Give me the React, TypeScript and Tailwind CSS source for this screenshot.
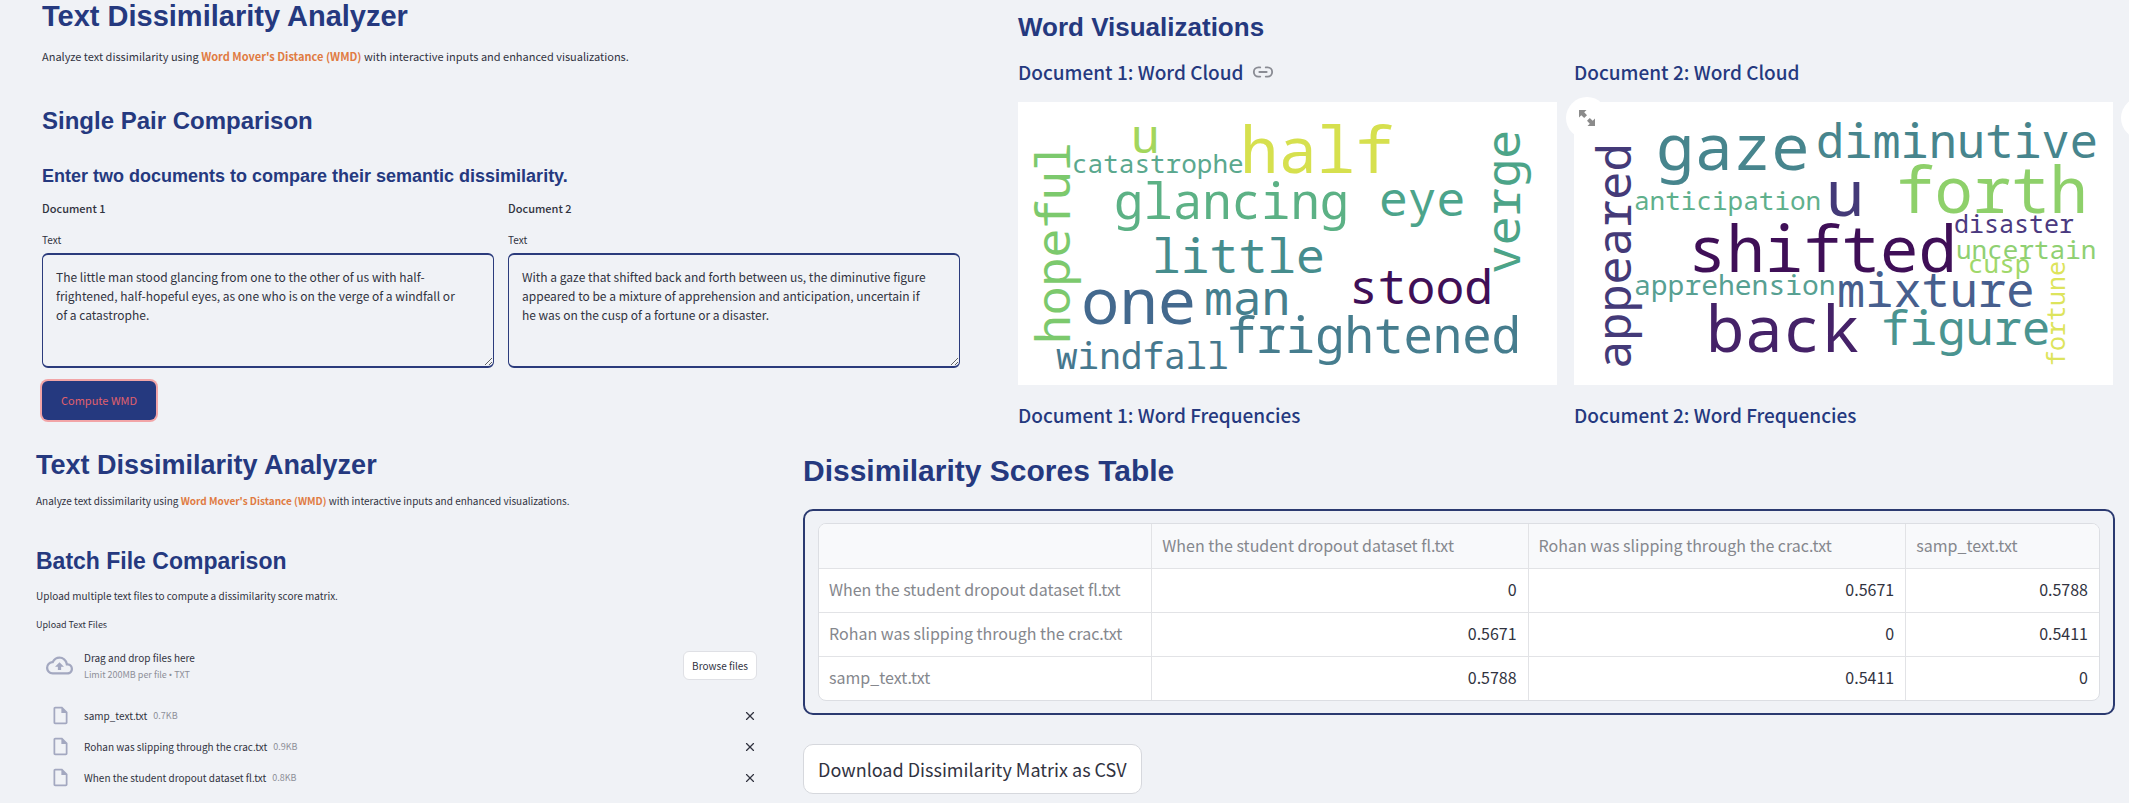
import React from "react";
import { Link2, X } from "lucide-react";
import { MdOutlineCloudUpload, MdOutlineInsertDriveFile } from "react-icons/md";

type Word = { text: string; x: number; y: number; size: number; color: string; up?: boolean };

const cloudOne: Word[] = [
  { text: "hopeful", x: 52, y: 242, size: 48, color: "#7cc96d", up: true },
  { text: "verge", x: 502, y: 172, size: 48, color: "#4ca488", up: true },
  { text: "u", x: 113, y: 51, size: 48, color: "#a3d65c" },
  { text: "half", x: 222, y: 71, size: 64, color: "#d6e04e" },
  { text: "catastrophe", x: 54, y: 71, size: 26, color: "#5aa88e" },
  { text: "glancing", x: 96, y: 117, size: 49, color: "#5cb185" },
  { text: "eye", x: 361, y: 114, size: 48, color: "#4ca48b" },
  { text: "little", x: 134, y: 171, size: 48, color: "#468d8d" },
  { text: "stood", x: 331, y: 202, size: 48, color: "#3f0f57" },
  { text: "one", x: 63, y: 222, size: 64, color: "#43698e" },
  { text: "man", x: 186, y: 213, size: 48, color: "#467f8e" },
  { text: "frightened", x: 209, y: 251, size: 49, color: "#467d8e" },
  { text: "windfall", x: 38, y: 267, size: 36, color: "#46788e" },
];

const cloudTwo: Word[] = [
  { text: "appeared", x: 57, y: 267, size: 47, color: "#443a78", up: true },
  { text: "fortune", x: 491, y: 264, size: 25, color: "#dde45c", up: true },
  { text: "gaze", x: 82, y: 68, size: 64, color: "#47858d" },
  { text: "diminutive", x: 242, y: 56, size: 47, color: "#47858d" },
  { text: "anticipation", x: 60, y: 108, size: 26, color: "#5fb08c" },
  { text: "u", x: 252, y: 114, size: 64, color: "#443a78" },
  { text: "forth", x: 322, y: 111, size: 64, color: "#8ed06a" },
  { text: "disaster", x: 380, y: 131, size: 25, color: "#4b3a80" },
  { text: "shifted", x: 114, y: 170, size: 64, color: "#3f0f57" },
  { text: "uncertain", x: 382, y: 157, size: 26, color: "#8fd072" },
  { text: "cusp", x: 394, y: 171, size: 26, color: "#a0d86a" },
  { text: "apprehension", x: 60, y: 193, size: 28, color: "#57a092" },
  { text: "mixture", x: 263, y: 205, size: 47, color: "#475f8e" },
  { text: "back", x: 132, y: 250, size: 64, color: "#452268" },
  { text: "figure", x: 307, y: 243, size: 47, color: "#4a9490" },
];

function WordCloud({ label, words }: { label: string; words: Word[] }) {
  return (
    <svg
      role="img"
      aria-label={label}
      viewBox="0 0 539 283"
      className="block w-full bg-white font-['Noto_Sans_Mono','Droid_Sans_Mono','DejaVu_Sans_Mono',monospace]"
    >
      {words.map((w) => (
        <text
          key={w.text}
          fontSize={w.size}
          fill={w.color}
          transform={w.up ? `translate(${w.x} ${w.y}) rotate(-90)` : `translate(${w.x} ${w.y})`}
        >
          {w.text}
        </text>
      ))}
    </svg>
  );
}

function ExpandButton({ className }: { className: string }) {
  return (
    <button
      type="button"
      aria-label="View fullscreen"
      className={`absolute flex size-[42px] items-center justify-center rounded-full bg-white ${className}`}
    >
      <svg viewBox="0 0 16 16" className="size-4 fill-[#8b8b8b]">
        <path d="M0 0H7.5L5.2 2.3L8 5.2L5.2 8L2.3 5.2L0 7.5Z" />
        <path d="M16 16H8.5L10.8 13.7L8 10.8L10.8 8L13.7 10.8L16 8.5Z" />
      </svg>
    </button>
  );
}

function Intro({ className }: { className: string }) {
  return (
    <p className={`leading-5 ${className}`}>
      Analyze text dissimilarity using <strong className="font-bold text-[#e07b42]">Word Mover's Distance (WMD)</strong> with
      interactive inputs and enhanced visualizations.
    </p>
  );
}

function DocumentInput({ id, title, value }: { id: string; title: string; value: string }) {
  return (
    <div className="flex flex-col">
      <p className="text-[11px] leading-5 font-medium">{title}</p>
      <label htmlFor={id} className="mt-3.5 text-[10px] leading-4">
        Text
      </label>
      <textarea
        id={id}
        rows={5}
        defaultValue={value}
        className="mt-[5px] block w-full resize rounded-md border-x border-y-2 border-[#2b3b7c] bg-transparent pt-3 pr-[27px] pb-1 pl-[13px] text-[12px] leading-[19px] outline-none"
      />
    </div>
  );
}

const files = [
  { name: "samp_text.txt", size: "0.7KB" },
  { name: "Rohan was slipping through the crac.txt", size: "0.9KB" },
  { name: "When the student dropout dataset fl.txt", size: "0.8KB" },
];

const columns = ["When the student dropout dataset fl.txt", "Rohan was slipping through the crac.txt", "samp_text.txt"];
const scores = [
  ["0", "0.5671", "0.5788"],
  ["0.5671", "0", "0.5411"],
  ["0.5788", "0.5411", "0"],
];

const heading = "font-['Liberation_Sans',Arial,sans-serif] font-bold text-[#25397f]";
const subheading = "text-[19px] leading-6 font-medium text-[#25397f]";

export default function App() {
  return (
    <main className="min-h-screen overflow-hidden bg-[#f0f2f6] font-['Noto_Sans_CJK_SC',sans-serif] text-[#31333f]">
      <div className="grid grid-cols-[960fr_1169fr]">
        <section className="flex flex-col pl-[42px]">
          <h1 className={`${heading} text-[29px] leading-8`}>Text Dissimilarity Analyzer</h1>
          <Intro className="mt-3.5 text-[11px]" />
          <h2 className={`${heading} mt-[39px] text-[24px] leading-8`}>Single Pair Comparison</h2>
          <h3 className={`${heading} mt-[27px] text-[18px] leading-6`}>
            Enter two documents to compare their semantic dissimilarity.
          </h3>
          <div className="mt-2.5 grid grid-cols-2 gap-3.5">
            <DocumentInput
              id="doc-1"
              title="Document 1"
              value="The little man stood glancing from one to the other of us with half-frightened, half-hopeful eyes, as one who is on the verge of a windfall or of a catastrophe."
            />
            <DocumentInput
              id="doc-2"
              title="Document 2"
              value="With a gaze that shifted back and forth between us, the diminutive figure appeared to be a mixture of apprehension and anticipation, uncertain if he was on the cusp of a fortune or a disaster."
            />
          </div>
          <button
            type="button"
            className="mt-[13px] self-start rounded-md bg-[#25397f] px-[19px] py-2.5 text-[11px] leading-[19px] text-[#e0606c] ring-2 ring-[#f2a5a7]"
          >
            Compute WMD
          </button>
        </section>

        <section className="flex flex-col pt-[11px] pr-4 pl-[58px]">
          <h2 className={`${heading} text-[26px] leading-8`}>Word Visualizations</h2>
          <div className="mt-[17px] grid grid-cols-2 gap-[17px]">
            <div>
              <h3 className={`${subheading} flex items-center gap-2`}>
                Document 1: Word Cloud
                <a href="#cloud-1" aria-label="Link to heading" className="text-[#8a8c94]">
                  <Link2 size={22} strokeWidth={2} />
                </a>
              </h3>
              <div id="cloud-1" className="mt-[18px]">
                <WordCloud label="Document 1 word cloud" words={cloudOne} />
              </div>
              <h3 className={`${subheading} mt-[18px]`}>Document 1: Word Frequencies</h3>
            </div>
            <div>
              <h3 className={subheading}>Document 2: Word Cloud</h3>
              <div className="relative mt-[18px]">
                <WordCloud label="Document 2 word cloud" words={cloudTwo} />
                <ExpandButton className="-top-[5px] -left-2" />
                <ExpandButton className="-top-[5px] -right-[50px]" />
              </div>
              <h3 className={`${subheading} mt-[18px]`}>Document 2: Word Frequencies</h3>
            </div>
          </div>
        </section>
      </div>

      <div className="grid grid-cols-[757fr_1372fr]">
        <section className="flex flex-col pt-[22px] pl-9">
          <h1 className={`${heading} text-[27px] leading-8`}>Text Dissimilarity Analyzer</h1>
          <Intro className="mt-2.5 text-[10px]" />
          <h2 className={`${heading} mt-[34px] text-[23px] leading-8`}>Batch File Comparison</h2>
          <p className="mt-[9px] text-[10px] leading-5">Upload multiple text files to compute a dissimilarity score matrix.</p>
          <p className="mt-[11px] text-[9px] leading-4">Upload Text Files</p>
          <div className="mt-[15px] flex items-center pl-2.5">
            <MdOutlineCloudUpload className="size-[27px] text-[#a3a8c0]" />
            <div className="ml-[11px] flex-1">
              <p className="text-[10px] leading-[19px]">Drag and drop files here</p>
              <p className="text-[9px] leading-4 text-[#8d8f98]">
                Limit 200MB per file <span className="font-['Noto_Sans',sans-serif]">•</span> TXT
              </p>
            </div>
            <button
              type="button"
              className="rounded-md border border-[#dfe0e5] bg-white px-2 py-1 text-[10px] leading-[19px]"
            >
              Browse files
            </button>
          </div>
          <ul className="mt-[17px]">
            {files.map((f) => (
              <li key={f.name} className="flex h-[31px] items-center pl-3.5">
                <MdOutlineInsertDriveFile className="size-[21px] text-[#a3a8c0]" />
                <span className="ml-[13px] text-[10px]">{f.name}</span>
                <span className="ml-1.5 flex-1 text-[9px] text-[#8d8f98]">{f.size}</span>
                <button type="button" aria-label={`Remove ${f.name}`}>
                  <X size={14} strokeWidth={2} />
                </button>
              </li>
            ))}
          </ul>
        </section>

        <section className="flex flex-col pt-6 pr-3.5 pl-[46px]">
          <h2 className={`${heading} text-[30px] leading-10`}>Dissimilarity Scores Table</h2>
          <div className="mt-[18px] rounded-[10px] border-2 border-[#2b3a70] px-[13px] py-3">
            <div className="overflow-hidden rounded-lg border border-[#dcdee3] bg-white">
              <table className="w-full table-fixed border-collapse text-[16px] leading-6 text-[#85878d]">
                <colgroup>
                  <col className="w-[26%]" />
                  <col className="w-[29.4%]" />
                  <col className="w-[29.5%]" />
                  <col className="w-[15.1%]" />
                </colgroup>
                <thead className="bg-[#f8f9fb]">
                  <tr className="h-11">
                    <th className="border-r border-b border-[#e2e3e6]" aria-label="File" />
                    {columns.map((c) => (
                      <th
                        key={c}
                        scope="col"
                        className="border-r border-b border-[#e2e3e6] px-2.5 pb-0.5 text-left font-normal last:border-r-0"
                      >
                        {c}
                      </th>
                    ))}
                  </tr>
                </thead>
                <tbody>
                  {scores.map((row, i) => (
                    <tr key={columns[i]} className="group h-11">
                      <th
                        scope="row"
                        className="border-r border-b border-[#e2e3e6] px-2.5 pb-0.5 text-left font-normal group-last:border-b-0"
                      >
                        {columns[i]}
                      </th>
                      {row.map((v, j) => (
                        <td
                          key={j}
                          className="border-r border-b border-[#e2e3e6] px-[11px] pb-0.5 text-right text-[#31333f] last:border-r-0 group-last:border-b-0"
                        >
                          {v}
                        </td>
                      ))}
                    </tr>
                  ))}
                </tbody>
              </table>
            </div>
          </div>
          <button
            type="button"
            className="mt-[29px] self-start rounded-[10px] border border-[#d6d8dd] bg-white px-3.5 py-[11px] text-[18px] leading-[26px]"
          >
            Download Dissimilarity Matrix as CSV
          </button>
        </section>
      </div>
    </main>
  );
}
